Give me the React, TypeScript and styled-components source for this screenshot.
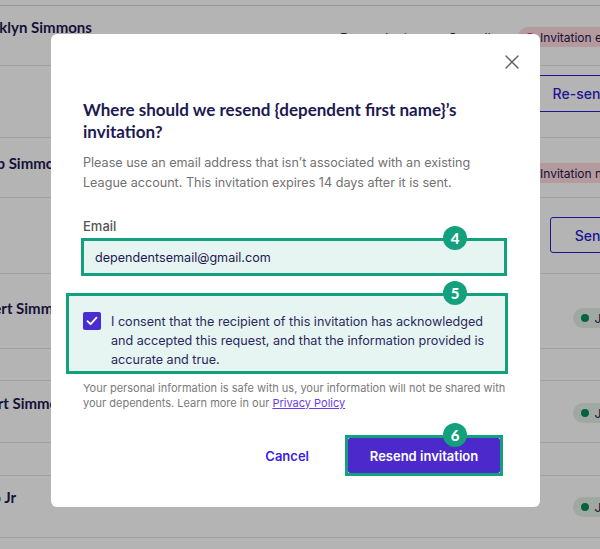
import { createGlobalStyle, styled } from 'styled-components';

const GlobalStyle = createGlobalStyle`
  html, body {
    margin: 0;
    padding: 0;
    background: #ffffff;
    overflow: hidden;
  }
  body {
    width: 600px;
    height: 549px;
    position: relative;
    font-family: Inter, 'Liberation Sans', sans-serif;
  }
  * {
    box-sizing: border-box;
  }
`;

const NAVY = '#1d1a52';
const GREEN = '#13a07d';
const PURPLE = '#4b29cb';

const Page = styled.div`
  width: 687px;
  margin-left: -33px;
  display: flex;
  flex-direction: column;
`;

const Row = styled.div<{ $h: number; $top?: number; $line?: string }>`
  height: ${(p) => p.$h}px;
  padding: ${(p) => p.$top ?? 0}px 11px 0 0;
  border-bottom: 1px solid ${(p) => p.$line ?? '#e3e3e3'};
  display: grid;
  grid-template-columns: 373px 178px 1fr;
  align-items: start;
`;

const ActionRow = styled.div<{ $h: number; $top: number }>`
  height: ${(p) => p.$h}px;
  padding: ${(p) => p.$top}px 20px 0 0;
  border-bottom: 1px solid #e3e3e3;
  display: flex;
  justify-content: flex-end;
  align-items: flex-start;
`;

const Name = styled.div`
  font-family: Lato, sans-serif;
  font-weight: 700;
  font-size: 15px;
  line-height: 20px;
  color: ${NAVY};
  white-space: nowrap;
`;

const Meta = styled.div`
  margin-top: 11px;
  display: flex;
  gap: 40px;
  font-size: 13px;
  line-height: 20px;
  color: #333;
`;

const Pill = styled.div<{ $tone: 'pink' | 'green' }>`
  grid-column: 3;
  justify-self: end;
  margin-top: 10px;
  height: 20px;
  padding: 0 10px 0 8px;
  border-radius: 10px;
  display: flex;
  align-items: center;
  gap: 6px;
  font-size: 12px;
  white-space: nowrap;
  color: ${NAVY};
  background: ${(p) => (p.$tone === 'pink' ? '#ffd9df' : '#e3efe8')};
`;

const Dot = styled.span<{ $tone: 'pink' | 'green' }>`
  width: 8px;
  height: 8px;
  border-radius: 50%;
  background: ${(p) => (p.$tone === 'pink' ? '#d23a4e' : '#0c8a5a')};
`;

const OutlineButton = styled.div<{ $h: number }>`
  height: ${(p) => p.$h}px;
  padding: 0 24px;
  border: 1.5px solid #2a1fcf;
  border-radius: 3px;
  display: flex;
  align-items: center;
  font-size: 14px;
  font-weight: 500;
  color: #2a1fcf;
  white-space: nowrap;
`;

const Backdrop = styled.div`
  position: absolute;
  inset: 0;
  background: rgba(0, 0, 0, 0.295);
`;

const Modal = styled.div`
  position: absolute;
  left: 51px;
  top: 34px;
  width: 489px;
  padding: 21px 32px 31px 32px;
  background: #ffffff;
  border-radius: 6px;
  display: flex;
  flex-direction: column;
`;

const CloseRow = styled.div`
  display: flex;
  justify-content: flex-end;
  margin-right: -11px;
  height: 14px;
`;

const Title = styled.h2`
  margin: 30px 0 0;
  font-family: Lato, sans-serif;
  font-weight: 700;
  font-size: 17px;
  line-height: 21.5px;
  color: ${NAVY};
`;

const Description = styled.p`
  margin: 11px 0 0;
  font-size: 12.6px;
  line-height: 20px;
  color: #727272;
`;

const Label = styled.label`
  margin-top: 24px;
  font-size: 13px;
  font-weight: 500;
  line-height: 18px;
  color: #555555;
`;

const Frame = styled.div`
  position: relative;
  border: 3px solid ${GREEN};
  background: #e6f5f1;
`;

const InputFrame = styled(Frame)`
  margin: 3px 1px 0 -2px;
  height: 38px;
  padding-left: 11px;
  display: flex;
  align-items: center;
  font-size: 12.6px;
  color: ${NAVY};
`;

const ConsentFrame = styled(Frame)`
  margin: 17px 0 0 -17px;
  height: 81px;
  padding: 16px 14px 0;
  display: flex;
  gap: 10px;
  align-items: flex-start;
`;

const Checkbox = styled.div`
  flex: none;
  width: 18px;
  height: 18px;
  border-radius: 2px;
  background: #4a2dd0;
  display: flex;
  align-items: center;
  justify-content: center;
`;

const ConsentText = styled.div`
  font-size: 12.6px;
  line-height: 19px;
  color: #2b2860;
`;

const Privacy = styled.p`
  margin: 7px 0 0;
  font-size: 11px;
  line-height: 15px;
  color: #7a7a7a;

  a {
    color: #6b3ce8;
    text-decoration: underline;
  }
`;

const Footer = styled.div`
  margin: 24px 5px 0 0;
  display: flex;
  justify-content: flex-end;
  align-items: center;
  gap: 36px;
`;

const TextButton = styled.button`
  border: none;
  background: none;
  padding: 0;
  font-family: Inter, sans-serif;
  font-size: 13px;
  font-weight: 600;
  color: #3b1fde;
`;

const ButtonFrame = styled(Frame)`
  background: transparent;
  width: 158px;
  height: 41px;
`;

const PrimaryButton = styled.button`
  width: 100%;
  height: 100%;
  border: none;
  border-radius: 2px;
  background: ${PURPLE};
  color: #ffffff;
  font-family: Inter, sans-serif;
  font-size: 13px;
  font-weight: 600;
`;

const Badge = styled.div<{ $right: number }>`
  position: absolute;
  top: -15px;
  right: ${(p) => p.$right}px;
  width: 24px;
  height: 24px;
  border-radius: 50%;
  background: ${GREEN};
  color: #ffffff;
  font-family: Lato, sans-serif;
  font-weight: 900;
  font-size: 15px;
  display: flex;
  align-items: center;
  justify-content: center;
`;

function CloseIcon() {
  return (
    <svg width="14" height="14" viewBox="0 0 14 14">
      <path d="M1 1L13 13M13 1L1 13" stroke="#5e5e5e" strokeWidth="1.4" strokeLinecap="round" />
    </svg>
  );
}

function CheckIcon() {
  return (
    <svg width="12" height="10" viewBox="0 0 12 10">
      <path d="M1.5 5.2L4.6 8.2L10.5 1.6" fill="none" stroke="#ffffff" strokeWidth="1.8" strokeLinecap="round" strokeLinejoin="round" />
    </svg>
  );
}

export default function App() {
  return (
    <>
      <GlobalStyle />
      <Page>
        <Row $h={6} $line="#d6d6d6" />
        <Row $h={60} $top={11}>
          <Name>Brooklyn Simmons</Name>
          <Meta>
            <span>Dependent</span>
            <span>Overall</span>
          </Meta>
          <Pill $tone="pink">
            <Dot $tone="pink" />
            Invitation expired
          </Pill>
        </Row>
        <ActionRow $h={72} $top={9}>
          <OutlineButton $h={37}>Re-send</OutlineButton>
        </ActionRow>
        <Row $h={60} $top={15}>
          <Name>Jacob Simmons</Name>
          <Pill $tone="pink">
            <Dot $tone="pink" />
            Invitation not sent
          </Pill>
        </Row>
        <ActionRow $h={76} $top={19}>
          <OutlineButton $h={36}>Send</OutlineButton>
        </ActionRow>
        <Row $h={75} $top={24}>
          <Name>Robert Simmons</Name>
          <Pill $tone="green">
            <Dot $tone="green" />
            Joined
          </Pill>
        </Row>
        <Row $h={32} />
        <Row $h={62} $top={12}>
          <Name>Albert Simmons</Name>
          <Pill $tone="green">
            <Dot $tone="green" />
            Joined
          </Pill>
        </Row>
        <Row $h={33} />
        <Row $h={62} $top={11}>
          <Name>Theo Jr</Name>
          <Pill $tone="green">
            <Dot $tone="green" />
            Joined
          </Pill>
        </Row>
        <Row $h={62} />
      </Page>

      <Backdrop />

      <Modal>
        <CloseRow>
          <CloseIcon />
        </CloseRow>
        <Title>Where should we resend {'{dependent first name}'}’s invitation?</Title>
        <Description>
          Please use an email address that isn’t associated with an existing League account. This
          invitation expires 14 days after it is sent.
        </Description>
        <Label>Email</Label>
        <InputFrame>
          dependentsemail@gmail.com
          <Badge $right={37}>4</Badge>
        </InputFrame>
        <ConsentFrame>
          <Checkbox>
            <CheckIcon />
          </Checkbox>
          <ConsentText>
            I consent that the recipient of this invitation has acknowledged and accepted this
            request, and that the information provided is accurate and true.
          </ConsentText>
          <Badge $right={38}>5</Badge>
        </ConsentFrame>
        <Privacy>
          Your personal information is safe with us, your information will not be shared with your
          dependents. Learn more in our <a>Privacy Policy</a>
        </Privacy>
        <Footer>
          <TextButton>Cancel</TextButton>
          <ButtonFrame>
            <PrimaryButton>Resend invitation</PrimaryButton>
            <Badge $right={33}>6</Badge>
          </ButtonFrame>
        </Footer>
      </Modal>
    </>
  );
}
